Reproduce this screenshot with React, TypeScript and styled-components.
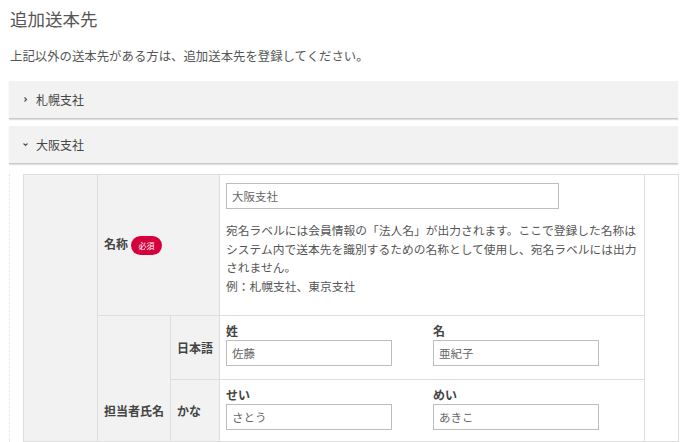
import React from "react";
import styled, { createGlobalStyle } from "styled-components";

const GlobalStyle = createGlobalStyle`
  body {
    margin: 0;
    background: #fff;
    font-family: "Noto Sans CJK JP", "Noto Sans", sans-serif;
    color: #555;
  }
`;

const Page = styled.div`
  padding: 6px 11px 0 9px;
`;

const Title = styled.h2`
  margin: 0 0 0 1px;
  font-size: 17.5px;
  font-weight: 400;
  line-height: 26px;
  color: #555;
`;

const Lead = styled.p`
  margin: 14px 0 15px 1px;
  font-size: 12.4px;
  line-height: 20px;
  color: #555;
`;

const AccordionHeader = styled.div`
  display: flex;
  align-items: center;
  gap: 7px;
  height: 37px;
  padding-left: 13px;
  margin-bottom: 7px;
  background: #f2f2f2;
  border-bottom: 1px solid #c9c9c9;
  box-shadow: 0 1px 1px rgba(0, 0, 0, 0.12);
  font-size: 12px;
  color: #444;
`;

const Panel = styled.div`
  margin-top: 10px;
  padding-left: 13px;
  border-left: 1px dotted #e2e2e2;
`;

const Table = styled.table`
  border-collapse: collapse;
  table-layout: fixed;
  width: 655px;
  font-size: 12px;
`;

const Row = styled.tr<{ $h: number }>`
  height: ${(p) => p.$h}px;
`;

const Cell = styled.td<{ $gray?: boolean }>`
  border: 1.5px solid #dedede;
  background: ${(p) => (p.$gray ? "#f2f2f2" : "#fff")};
  padding: 0;
  vertical-align: middle;
`;

const LabelCell = styled(Cell)`
  padding-left: 6px;
  font-weight: 700;
  color: #444;
`;

const GroupLabelCell = styled(LabelCell)`
  padding-top: 64px;
`;

const ContentCell = styled(Cell)`
  padding: 8px 0 18px 6px;
  vertical-align: top;
`;

const NameCell = styled(Cell)`
  padding: 6px 0 11px 6px;
  vertical-align: top;
`;

const Required = styled.span`
  display: inline-flex;
  align-items: center;
  justify-content: center;
  width: 31px;
  height: 19px;
  margin-left: 3px;
  border-radius: 10px;
  background: #d5003c;
  color: #fff;
  font-size: 8px;
  font-weight: 400;
  vertical-align: middle;
`;

const TextInput = styled.div<{ $w: number }>`
  box-sizing: border-box;
  width: ${(p) => p.$w}px;
  height: 26px;
  padding-left: 5px;
  border: 1px solid #bdbdbd;
  display: flex;
  align-items: center;
  font-size: 11.5px;
  color: #666;
`;

const Help = styled.p`
  margin: 12px 0 0;
  font-size: 11.75px;
  line-height: 18.5px;
  color: #555;
  width: 418px;
`;

const NameRow = styled.div`
  display: flex;
  gap: 41px;
`;

const Field = styled.div`
  display: flex;
  flex-direction: column;
`;

const FieldLabel = styled.span`
  font-size: 12px;
  font-weight: 700;
  line-height: 18px;
  color: #444;
`;

const Chevron = ({ open }: { open?: boolean }) => (
  <svg width="7" height="7" viewBox="0 0 7 7">
    <path
      d={open ? "M1.5 2.5 L3.5 4.5 L5.5 2.5" : "M2.5 1.5 L4.5 3.5 L2.5 5.5"}
      fill="none"
      stroke="#555"
      strokeWidth="1.2"
    />
  </svg>
);

const nameRows = [
  { label: "日本語", h: 64, first: ["姓", "佐藤"], last: ["名", "亜紀子"] },
  { label: "かな", h: 62, first: ["せい", "さとう"], last: ["めい", "あきこ"] }
];

export default function App() {
  return (
    <Page>
      <GlobalStyle />
      <Title>追加送本先</Title>
      <Lead>上記以外の送本先がある方は、追加送本先を登録してください。</Lead>
      <AccordionHeader>
        <Chevron />
        札幌支社
      </AccordionHeader>
      <AccordionHeader>
        <Chevron open />
        大阪支社
      </AccordionHeader>
      <Panel>
        <Table>
          <colgroup>
            <col style={{ width: 74 }} />
            <col style={{ width: 73 }} />
            <col style={{ width: 49 }} />
            <col style={{ width: 425 }} />
            <col style={{ width: 34 }} />
          </colgroup>
          <tbody>
            <Row $h={141}>
              <Cell $gray rowSpan={3} />
              <LabelCell $gray colSpan={2}>
                名称<Required>必須</Required>
              </LabelCell>
              <ContentCell>
                <TextInput $w={333}>大阪支社</TextInput>
                <Help>
                  宛名ラベルには会員情報の「法人名」が出力されます。ここで登録した名称はシステム内で送本先を識別するための名称として使用し、宛名ラベルには出力されません。
                  <br />
                  例：札幌支社、東京支社
                </Help>
              </ContentCell>
              <Cell rowSpan={3} />
            </Row>
            {nameRows.map((row, i) => (
              <Row key={row.label} $h={row.h}>
                {i === 0 && (
                  <GroupLabelCell $gray rowSpan={2}>
                    担当者氏名
                  </GroupLabelCell>
                )}
                <LabelCell $gray>{row.label}</LabelCell>
                <NameCell>
                  <NameRow>
                    <Field>
                      <FieldLabel>{row.first[0]}</FieldLabel>
                      <TextInput $w={166}>{row.first[1]}</TextInput>
                    </Field>
                    <Field>
                      <FieldLabel>{row.last[0]}</FieldLabel>
                      <TextInput $w={166}>{row.last[1]}</TextInput>
                    </Field>
                  </NameRow>
                </NameCell>
              </Row>
            ))}
          </tbody>
        </Table>
      </Panel>
    </Page>
  );
}
